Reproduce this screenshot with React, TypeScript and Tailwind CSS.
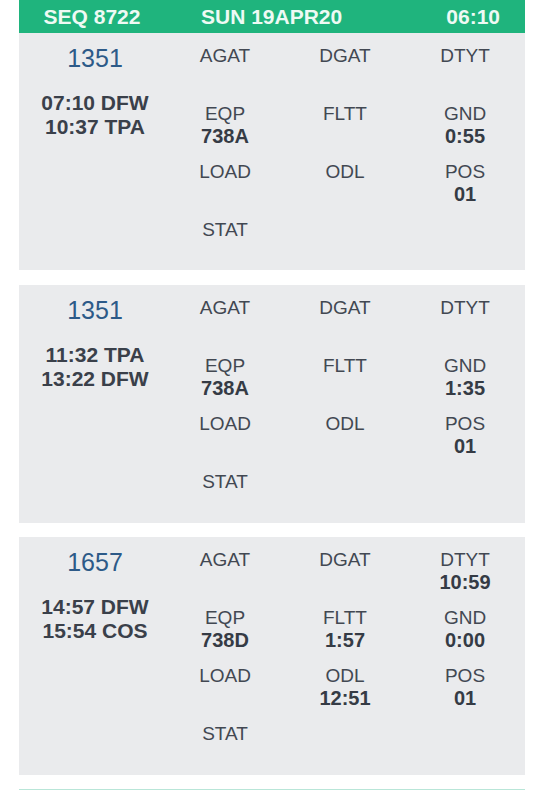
const legs = [
  {
    flt: "1351",
    dep: "07:10 DFW",
    arr: "10:37 TPA",
    cells: [
      { label: "AGAT" },
      { label: "DGAT" },
      { label: "DTYT" },
      { label: "EQP", value: "738A" },
      { label: "FLTT" },
      { label: "GND", value: "0:55" },
      { label: "LOAD" },
      { label: "ODL" },
      { label: "POS", value: "01" },
      { label: "STAT" },
    ],
  },
  {
    flt: "1351",
    dep: "11:32 TPA",
    arr: "13:22 DFW",
    cells: [
      { label: "AGAT" },
      { label: "DGAT" },
      { label: "DTYT" },
      { label: "EQP", value: "738A" },
      { label: "FLTT" },
      { label: "GND", value: "1:35" },
      { label: "LOAD" },
      { label: "ODL" },
      { label: "POS", value: "01" },
      { label: "STAT" },
    ],
  },
  {
    flt: "1657",
    dep: "14:57 DFW",
    arr: "15:54 COS",
    cells: [
      { label: "AGAT" },
      { label: "DGAT" },
      { label: "DTYT", value: "10:59" },
      { label: "EQP", value: "738D" },
      { label: "FLTT", value: "1:57" },
      { label: "GND", value: "0:00" },
      { label: "LOAD" },
      { label: "ODL", value: "12:51" },
      { label: "POS", value: "01" },
      { label: "STAT" },
    ],
  },
];

type Leg = (typeof legs)[number];

const LegCard = ({ leg, first }: { leg: Leg; first?: boolean }) => {
  return (
    <div
      className={`flex bg-[#eaebed] pt-[12px] ${first ? "h-[237px]" : "h-[238px]"}`}
    >
      <div className="w-[146px] pl-[6px] flex flex-col items-center -mt-[2px]">
        <div className="text-[25px] leading-[30px] text-[#2d5a88]">{leg.flt}</div>
        <div className="mt-[18px] text-[21px] leading-[24px] font-bold text-[#3a404a] text-center">
          <div>{leg.dep}</div>
          <div>{leg.arr}</div>
        </div>
      </div>
      <div className="flex-1 grid grid-cols-3 auto-rows-[44px] gap-y-[14px]">
        {leg.cells.map((c, i) => (
          <div key={i} className="flex flex-col items-center">
            <span className="text-[19px] leading-[22px] text-[#424852]">{c.label}</span>
            {c.value && (
              <span className="text-[20px] leading-[22px] font-bold text-[#353b45]">
                {c.value}
              </span>
            )}
          </div>
        ))}
      </div>
    </div>
  );
};

export default function App() {
  return (
    <div className="w-[544px] h-[790px] bg-white overflow-hidden font-['Liberation_Sans',Arial,sans-serif]">
      <div className="mx-[19px]">
        <div className="h-[33px] bg-[#1fb47d] flex items-center text-[21px] font-bold text-[#eefaf4]">
          <div className="w-[146px] text-center">SEQ 8722</div>
          <div className="pl-[36px]">SUN 19APR20</div>
          <div className="ml-auto pr-[25px]">06:10</div>
        </div>
        <LegCard leg={legs[0]} first />
        <div className="h-[15px]" />
        <LegCard leg={legs[1]} />
        <div className="h-[14px]" />
        <LegCard leg={legs[2]} />
        <div className="h-[14px]" />
        <div className="h-[2px] bg-[#b9e6d8]" />
      </div>
    </div>
  );
}
